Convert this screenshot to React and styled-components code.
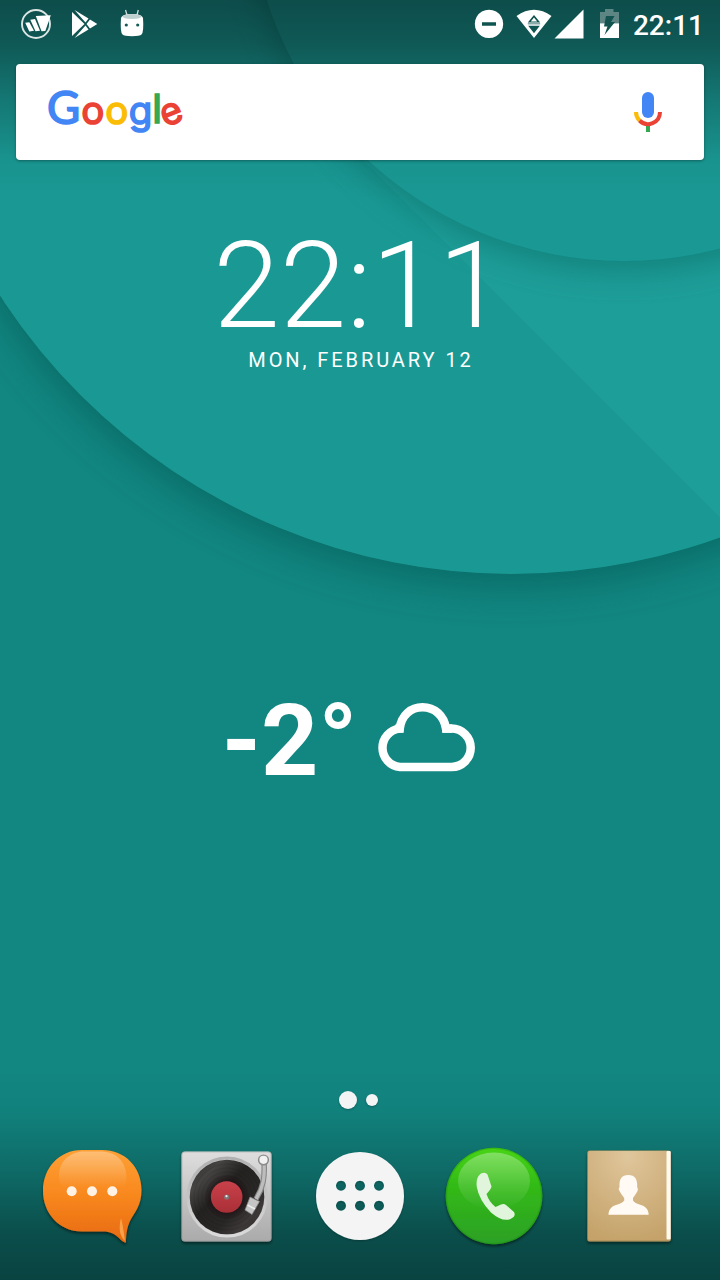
import React from 'react';
import styled, { createGlobalStyle } from 'styled-components';

const GlobalStyle = createGlobalStyle`
  * { box-sizing: border-box; }
  body { margin: 0; background: #128681; overflow: hidden; }
`;

const Screen = styled.main`
  position: relative;
  display: flex;
  flex-direction: column;
  width: 720px;
  height: 1280px;
  overflow: hidden;
  color: #fff;
  font-family: Roboto, 'Liberation Sans', sans-serif;
`;

const Wallpaper = styled.svg`
  position: absolute;
  inset: 0;
  z-index: -1;
`;

const Icon = styled.svg`
  display: block;
  flex: none;
  overflow: visible;
`;

const StatusBar = styled.header`
  display: flex;
  justify-content: space-between;
  height: 48px;
  padding: 0 16px 0 20px;
`;

const StatusGroup = styled.div`
  display: flex;
  align-items: center;
`;

const NotificationGroup = styled(StatusGroup)`
  gap: 19px;
`;

const StatusTime = styled.span`
  padding: 3px 0 0 12px;
  font-size: 28px;
  font-weight: 500;
  line-height: 48px;
`;

const SearchBar = styled.section`
  display: flex;
  align-items: center;
  justify-content: space-between;
  height: 96px;
  margin: 16px 16px 0;
  padding: 0 40px 0 32px;
  border-radius: 4px;
  background: #fff;
  box-shadow: 0 1px 3px rgba(0, 0, 0, 0.35);
`;

const Logo = styled.svg`
  display: block;
  overflow: visible;
  font-family: Inter, sans-serif;
  font-size: 38.5px;
  text-anchor: middle;
`;

const Clock = styled.section`
  display: flex;
  flex-direction: column;
  align-items: center;
  height: 340px;
  padding-top: 65px;
`;

const ClockTime = styled.div`
  padding-right: 2px;
  font-size: 120px;
  font-weight: 300;
  line-height: 122px;
`;

const ClockDate = styled.div`
  padding-left: 2px;
  font-size: 20px;
  line-height: 24px;
  letter-spacing: 2.92px;
  margin-top: 1px;
`;

const Weather = styled.section`
  display: flex;
  justify-content: center;
  height: 590px;
  padding: 181px 23px 0 0;
  gap: 20px;
`;

const Temperature = styled.div`
  font-size: 100px;
  font-weight: 700;
  line-height: 120px;
`;

const CloudSlot = styled.div`
  padding-top: 21px;
`;

const Pager = styled.nav`
  display: flex;
  align-items: center;
  justify-content: center;
  gap: 9px;
  height: 20px;
  padding-right: 3px;
`;

const PageDot = styled.span`
  width: ${({ $size }) => $size}px;
  height: ${({ $size }) => $size}px;
  border-radius: 50%;
  background: #f4f4f4;
  box-shadow: 0 1px 2px rgba(0, 0, 0, 0.25);
`;

const Dock = styled.footer`
  display: grid;
  grid-template-columns: repeat(5, 134px);
  justify-content: center;
  height: 170px;
  padding: 36px 0 0;
`;

const DockItem = styled.div`
  display: flex;
  justify-content: center;
`;

function Background() {
  return (
    <Wallpaper width="720" height="1280" viewBox="0 0 720 1280">
      <defs>
        <filter id="soft" x="-20%" y="-20%" width="140%" height="140%">
          <feGaussianBlur stdDeviation="19" />
        </filter>
        <filter id="softer" x="-20%" y="-20%" width="140%" height="140%">
          <feGaussianBlur stdDeviation="17" />
        </filter>
        <clipPath id="disc"><circle cx="512" cy="-36" r="610" /></clipPath>
        <linearGradient id="top" x1="0" y1="0" x2="0" y2="1">
          <stop offset="0" stopColor="#000" stopOpacity=".5" />
          <stop offset=".22" stopColor="#000" stopOpacity=".42" />
          <stop offset=".5" stopColor="#000" stopOpacity=".22" />
          <stop offset=".8" stopColor="#000" stopOpacity=".04" />
          <stop offset="1" stopColor="#000" stopOpacity="0" />
        </linearGradient>
        <linearGradient id="bottom" x1="0" y1="0" x2="0" y2="1">
          <stop offset="0" stopColor="#000" stopOpacity="0" />
          <stop offset=".2" stopColor="#000" stopOpacity=".04" />
          <stop offset=".5" stopColor="#000" stopOpacity=".22" />
          <stop offset=".78" stopColor="#000" stopOpacity=".42" />
          <stop offset="1" stopColor="#000" stopOpacity=".5" />
        </linearGradient>
      </defs>
      <rect width="720" height="1280" fill="#128681" />
      <circle cx="512" cy="-24" r="610" fill="#004f4c" opacity=".5" filter="url(#soft)" />
      <circle cx="512" cy="-36" r="610" fill="#1a9994" />
      <g clipPath="url(#disc)">
        <path d="M357 154 L720 517 V154Z" fill="#1e9e99" />
        <circle cx="624" cy="-106" r="375" fill="#00524e" opacity=".42" filter="url(#softer)" />
      </g>
      <circle cx="624" cy="-114" r="375" fill="#1a9994" />
      <rect width="720" height="200" fill="url(#top)" />
      <rect y="1070" width="720" height="210" fill="url(#bottom)" />
    </Wallpaper>
  );
}

function VikingIcon() {
  return (
    <Icon width="32" height="32" viewBox="20 8 32 32">
      <circle cx="36" cy="24" r="14" fill="none" stroke="#fff" strokeWidth="1.9" opacity=".85" />
      <path d="M25.200 22.700 L29.300 22.200 L34 30.800 L29.300 31.500Z M30.300 19.800 L35 19 L40 30.800 L35.500 31.300Z M35.800 16 L50.800 15.300 L45.300 31 L41.500 31.300Z" fill="#fff" />
    </Icon>
  );
}

function PlayIcon() {
  return (
    <Icon width="28" height="30" viewBox="71 9 28 30">
      <path d="M72 12 L84.500 24 L72 36Z M74.500 10 L88.500 18.500 L85.500 22.500Z M90 19.500 L97.300 24 L90 28.500 L86.500 24Z M85.500 25.500 L88.500 29.500 L74.500 38Z" fill="#fff" />
    </Icon>
  );
}

function AndroidIcon() {
  return (
    <Icon width="26" height="30" viewBox="118 8 26 30">
      <path d="M125.500 9 L127 14 M138.300 9 L137 14" stroke="#cfdddc" strokeWidth="1.300" />
      <path d="M121 17 Q120 31 122.500 33.500 Q124 35.200 132 35.200 Q140 35.200 141.500 33.500 Q144 31 143 17 Q142 13 132 13 Q122 13 121 17Z" fill="#fff" />
      <path d="M122 15.500 Q124 13 132 13 Q140 13 142 15.500 Q140 18 132 18 Q124 18 122 15.500Z" fill="#bdd0cf" />
      <circle cx="126.300" cy="24" r="1.600" fill="#155a57" />
      <circle cx="137.700" cy="24" r="1.600" fill="#155a57" />
    </Icon>
  );
}

function SignalIcons() {
  return (
    <Icon width="148" height="32" viewBox="473 8 148 32">
      <path fillRule="evenodd" d="M489 9.700 a14.200 14.200 0 1 0 .01 0Z M482 22.200 h14 v3.600 h-14Z" fill="#fff" />
      <path
        fillRule="evenodd"
        d="M516.500 16 Q534 3.500 551.500 16 L534 38Z M534 15 L527.800 22.600 H540.200Z M534 17.600 L530.800 21.400 H537.200Z M527.800 23.500 V24.300 H540.200 V23.500Z M528.200 25.800 L534 33.200 L539.800 25.800Z"
        fill="#fff"
      />
      <path d="M583.500 9.500 V38.500 H554.500Z" fill="#fff" />
      <path d="M600 12 H605 V9 H613.500 V12 H619 V23.300 H600Z" fill="#5c8583" />
      <path d="M600 23.300 H619 V38 H600Z" fill="#fff" />
      <path d="M606 16 H614.500 L611 22 H615 L604.500 35 L607.500 26.500 H604Z" fill="#125350" />
    </Icon>
  );
}

function GoogleLogo() {
  return (
    <Logo width="136" height="48" viewBox="48 88 136 48" aria-label="Google">
      <g strokeWidth="1.6">
        <text x="63.500" y="124" fill="#4285f4" stroke="#4285f4" fontFamily="Lato" fontSize="45.500">G</text>
        <text x="92.700" y="124" fill="#ea4335" stroke="#ea4335">o</text>
        <text x="116.700" y="124" fill="#fbbc05" stroke="#fbbc05">o</text>
        <text x="140.500" y="124" fill="#4285f4" stroke="#4285f4">g</text>
        <text x="157" y="123.200" fill="#34a853" stroke="#34a853" fontSize="40">l</text>
        <text x="171.500" y="124" fill="#ea4335" stroke="#ea4335" fontSize="37" transform="rotate(-22 171.500 114)">e</text>
      </g>
    </Logo>
  );
}

function MicIcon() {
  return (
    <Icon width="32" height="44" viewBox="632 90 32 44">
      <rect x="642" y="92" width="12" height="26" rx="6" fill="#4285f4" />
      <path d="M648 125 V132" stroke="#34a853" strokeWidth="4" />
      <path d="M636 112 A12 12 0 0 0 639.500 120.500" fill="none" stroke="#fbbc05" strokeWidth="4" />
      <path d="M639.500 120.500 A12 12 0 0 0 660 112" fill="none" stroke="#ea4335" strokeWidth="4" />
    </Icon>
  );
}

function CloudIcon() {
  return (
    <Icon width="98" height="70" viewBox="378 702 98 70">
      <path d="M401 767 A19.300 19.300 0 0 1 400.700 728.600 C402.500 715 412 707.300 423.500 707.300 C435.500 707.300 445 715.500 447 728.600 H452.500 A19.200 19.200 0 0 1 452.500 767Z" fill="none" stroke="#fff" strokeWidth="8.500" />
      <path d="M396 724.600 H404.600 V732.800 H398Z M443 724.600 H453 V732.800 H443.300Z" fill="#fff" />
    </Icon>
  );
}

function MessagesIcon() {
  return (
    <Icon width="100" height="100" viewBox="42 1146 100 100">
      <defs>
        <linearGradient id="orange" x1="0" y1="0" x2="0" y2="1">
          <stop offset="0" stopColor="#fda035" />
          <stop offset=".45" stopColor="#f98a20" />
          <stop offset="1" stopColor="#e8690f" />
        </linearGradient>
        <linearGradient id="shine" x1="0" y1="0" x2="0" y2="1">
          <stop offset="0" stopColor="#fff" stopOpacity=".32" />
          <stop offset="1" stopColor="#fff" stopOpacity="0" />
        </linearGradient>
        <filter id="drop" x="-20%" y="-20%" width="140%" height="150%">
          <feDropShadow dx="0" dy="2" stdDeviation="1.500" floodColor="#000" floodOpacity=".5" />
        </filter>
      </defs>
      <path filter="url(#drop)" d="M82 1150 H102 C125 1150 141.500 1167 141.500 1190 C141.500 1205 135 1212 130.500 1220 C127.500 1226 126 1233 126 1242.500 C120 1242.500 118 1231.500 103 1231.500 H82 C59 1231.500 43 1213 43 1191 C43 1168 59 1150 82 1150Z" fill="url(#orange)" />
      <path d="M84 1151.500 H101 C120 1151.500 126.500 1166 126.500 1178 Q126 1185 123 1188 H63 Q59 1184 59 1174 C60 1160 71 1151.500 84 1151.500Z" fill="url(#shine)" />
      <path d="M121 1218 Q117 1234 125 1241 Q123 1225 121 1218Z" fill="#ffb25b" opacity=".75" />
      <circle cx="71.700" cy="1191.200" r="5" fill="#fff1e4" />
      <circle cx="92" cy="1191.200" r="5" fill="#fff1e4" />
      <circle cx="112.300" cy="1191.200" r="5" fill="#fff1e4" />
    </Icon>
  );
}

function TurntableIcon() {
  return (
    <Icon width="94" height="100" viewBox="179 1146 94 100">
      <defs>
        <linearGradient id="metal" x1="0" y1="0" x2="0" y2="1">
          <stop offset="0" stopColor="#dedede" />
          <stop offset="1" stopColor="#aaaaaa" />
        </linearGradient>
        <linearGradient id="rim" x1="0" y1="0" x2="0" y2="1">
          <stop offset="0" stopColor="#b0b0b0" />
          <stop offset="1" stopColor="#dadada" />
        </linearGradient>
        <radialGradient id="glow">
          <stop offset=".4" stopColor="#170809" stopOpacity=".9" />
          <stop offset="1" stopColor="#170809" stopOpacity="0" />
        </radialGradient>
        <linearGradient id="label" x1="0" y1="0" x2="0" y2="1">
          <stop offset="0" stopColor="#c9414a" />
          <stop offset="1" stopColor="#a92f37" />
        </linearGradient>
        <linearGradient id="vinyl" x1="0" y1="0" x2="1" y2="1">
          <stop offset="0" stopColor="#2b2929" />
          <stop offset=".22" stopColor="#464343" />
          <stop offset=".42" stopColor="#242121" />
          <stop offset=".65" stopColor="#292626" />
          <stop offset=".8" stopColor="#3e3939" />
          <stop offset="1" stopColor="#252323" />
        </linearGradient>
      </defs>
      <rect filter="url(#drop)" x="181.500" y="1151.500" width="90" height="90" rx="3.500" fill="url(#metal)" />
      <rect x="182" y="1152" width="89" height="89" rx="3" fill="none" stroke="#8c8c8c" strokeOpacity=".35" />
      <circle cx="227" cy="1197" r="39" fill="none" stroke="url(#rim)" strokeWidth="3" />
      <circle cx="227" cy="1197" r="37.300" fill="url(#vinyl)" />
      <g fill="none" stroke="#151313" strokeWidth=".6" opacity=".22">
        <circle cx="227" cy="1197" r="33" />
        <circle cx="227" cy="1197" r="29" />
        <circle cx="227" cy="1197" r="25" />
        <circle cx="227" cy="1197" r="21" />
      </g>
      <circle cx="227" cy="1197" r="23" fill="url(#glow)" />
      <circle cx="226.700" cy="1197" r="15.800" fill="url(#label)" />
      <circle cx="226.700" cy="1197" r="2.600" fill="#7d7778" />
      <circle cx="226.500" cy="1196.200" r="1.100" fill="#eee" />
      <path d="M264 1162 C265 1178 263 1188 256 1199" fill="none" stroke="#858585" strokeWidth="5.500" />
      <path d="M264 1162 C265 1178 263 1188 256 1199" fill="none" stroke="#bdbdbd" strokeWidth="3.300" />
      <circle cx="263.500" cy="1160" r="5.600" fill="#8b8b8b" />
      <circle cx="263.500" cy="1159.800" r="4.100" fill="#f1f1f1" />
      <path d="M250 1197 L259.500 1201.500 L252 1214.500 L245 1210Z" fill="#c5c5c5" stroke="#888" strokeWidth=".7" />
      <path d="M247.500 1205 L255 1209" stroke="#eee" strokeWidth="1.500" />
    </Icon>
  );
}

function AppsIcon() {
  return (
    <Icon width="90" height="100" viewBox="315 1146 90 100">
      <path
        filter="url(#appsDrop)"
        fillRule="evenodd"
        fill="#f4f4f4"
        d="M360 1152 a44 44 0 1 0 .01 0Z M341 1180.700 a5 5 0 1 0 .01 0Z M360 1180.700 a5 5 0 1 0 .01 0Z M379 1180.700 a5 5 0 1 0 .01 0Z M341 1200.700 a5 5 0 1 0 .01 0Z M360 1200.700 a5 5 0 1 0 .01 0Z M379 1200.700 a5 5 0 1 0 .01 0Z"
      />
      <defs>
        <filter id="appsDrop" x="-10%" y="-10%" width="120%" height="125%">
          <feDropShadow dx="0" dy="1" stdDeviation="1" floodColor="#000" floodOpacity=".25" />
        </filter>
      </defs>
    </Icon>
  );
}

function PhoneIcon() {
  return (
    <Icon width="100" height="100" viewBox="444 1146 100 100">
      <defs>
        <linearGradient id="green" x1="0" y1="0" x2="0" y2="1">
          <stop offset="0" stopColor="#48d417" />
          <stop offset=".4" stopColor="#32ba17" />
          <stop offset="1" stopColor="#2ca026" />
        </linearGradient>
        <linearGradient id="greenShine" x1="0" y1="0" x2="0" y2="1">
          <stop offset="0" stopColor="#fff" stopOpacity=".32" />
          <stop offset="1" stopColor="#fff" stopOpacity="0" />
        </linearGradient>
      </defs>
      <circle filter="url(#drop)" cx="494" cy="1196" r="48.300" fill="url(#green)" />
      <circle cx="494" cy="1196" r="47.600" fill="none" stroke="#187f0c" strokeOpacity=".3" strokeWidth="1.400" />
      <ellipse cx="494" cy="1181" rx="36" ry="28.500" fill="url(#greenShine)" />
      <path d="M481 1173.500 Q485.500 1171.500 487.500 1174.500 L491.500 1186.500 Q491 1189 486.500 1194 Q489 1202 495.500 1207 L501 1204.500 Q504 1203.500 506 1205 L514 1212 Q516.500 1216.500 510 1219.200 Q502 1222 491 1212.500 Q479 1200 476.800 1187 Q475.500 1177 481 1173.500Z" fill="#e1f5dd" />
    </Icon>
  );
}

function ContactsIcon() {
  return (
    <Icon width="88" height="100" viewBox="584 1146 88 100">
      <defs>
        <radialGradient id="tan" cx=".5" cy=".05" r="1">
          <stop offset="0" stopColor="#e0c69c" />
          <stop offset="1" stopColor="#c4a269" />
        </radialGradient>
      </defs>
      <rect filter="url(#drop)" x="587.300" y="1150.500" width="83.500" height="91" rx="2.500" fill="#b6965f" />
      <rect x="588" y="1151" width="80" height="89" rx="2" fill="url(#tan)" />
      <rect x="666.500" y="1151" width="4.200" height="88.500" rx="1" fill="#fffaf0" />
      <path d="M628.300 1175 C635 1175 637.500 1179 637.200 1187.500 Q638.500 1188 637.500 1191 Q636 1194 633 1198 V1200.500 Q634.500 1203 641 1205 C647 1207 648.700 1211 648.700 1214.800 H608.500 C608.500 1211 610 1207 616 1205 Q622.500 1203 624.200 1200.500 V1198 Q621 1194 619.500 1191 Q618 1188 619.500 1187.500 C619 1179 621.500 1175 628.300 1175Z" fill="#fffaf3" />
    </Icon>
  );
}

const dockApps = [
  { name: 'messages', Glyph: MessagesIcon },
  { name: 'music', Glyph: TurntableIcon },
  { name: 'apps', Glyph: AppsIcon },
  { name: 'phone', Glyph: PhoneIcon },
  { name: 'contacts', Glyph: ContactsIcon },
];

export default function App() {
  return (
    <>
      <GlobalStyle />
      <Screen>
        <Background />
        <StatusBar>
          <NotificationGroup>
            <VikingIcon />
            <PlayIcon />
            <AndroidIcon />
          </NotificationGroup>
          <StatusGroup>
            <SignalIcons />
            <StatusTime>22:11</StatusTime>
          </StatusGroup>
        </StatusBar>
        <SearchBar>
          <GoogleLogo />
          <MicIcon />
        </SearchBar>
        <Clock>
          <ClockTime>22:11</ClockTime>
          <ClockDate>MON, FEBRUARY 12</ClockDate>
        </Clock>
        <Weather>
          <Temperature>-2°</Temperature>
          <CloudSlot>
            <CloudIcon />
          </CloudSlot>
        </Weather>
        <Pager>
          <PageDot $size={18} />
          <PageDot $size={12} />
        </Pager>
        <Dock>
          {dockApps.map(({ name, Glyph }) => (
            <DockItem key={name}>
              <Glyph />
            </DockItem>
          ))}
        </Dock>
      </Screen>
    </>
  );
}
